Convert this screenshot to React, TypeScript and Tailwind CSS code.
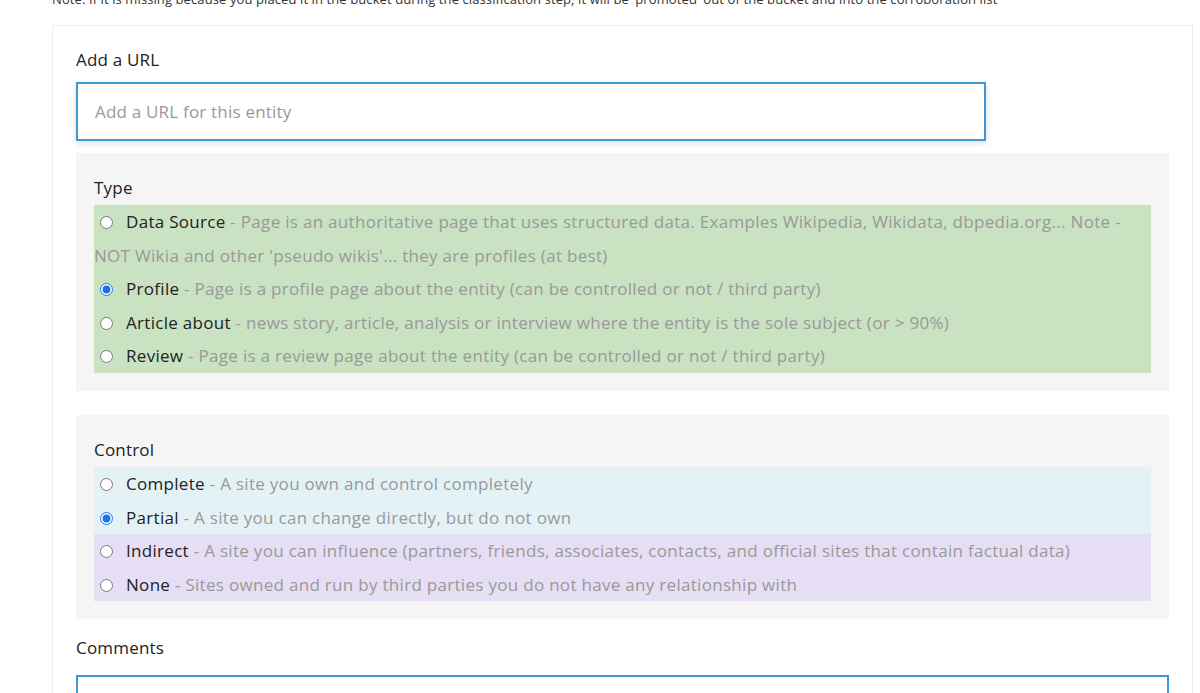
import React, { useState } from 'react';

interface Choice {
  value: string;
  label: string;
  desc: string;
  tint: string;
}

const TYPES: Choice[] = [
  {
    value: 'data',
    label: 'Data Source',
    desc: "Page is an authoritative page that uses structured data. Examples Wikipedia, Wikidata, dbpedia.org... Note - NOT Wikia and other 'pseudo wikis'... they are profiles (at best)",
    tint: 'bg-[#c9e2c1]',
  },
  {
    value: 'profile',
    label: 'Profile',
    desc: 'Page is a profile page about the entity (can be controlled or not / third party)',
    tint: 'bg-[#c9e2c1]',
  },
  {
    value: 'article',
    label: 'Article about',
    desc: 'news story, article, analysis or interview where the entity is the sole subject (or > 90%)',
    tint: 'bg-[#c9e2c1]',
  },
  {
    value: 'review',
    label: 'Review',
    desc: 'Page is a review page about the entity (can be controlled or not / third party)',
    tint: 'bg-[#c9e2c1]',
  },
];

const CONTROLS: Choice[] = [
  { value: 'complete', label: 'Complete', desc: 'A site you own and control completely', tint: 'bg-[#e4f2f6]' },
  { value: 'partial', label: 'Partial', desc: 'A site you can change directly, but do not own', tint: 'bg-[#e4f2f6]' },
  {
    value: 'indirect',
    label: 'Indirect',
    desc: 'A site you can influence (partners, friends, associates, contacts, and official sites that contain factual data)',
    tint: 'bg-[#e6def4]',
  },
  {
    value: 'none',
    label: 'None',
    desc: 'Sites owned and run by third parties you do not have any relationship with',
    tint: 'bg-[#e6def4]',
  },
];

function RadioGroup({
  title,
  name,
  options,
  value,
  onChange,
}: {
  title: string;
  name: string;
  options: Choice[];
  value: string;
  onChange: (v: string) => void;
}) {
  return (
    <div className="bg-[#f5f5f5] px-[18px] pt-[24px] pb-[18px]">
      <div className="text-[17px] leading-[22px] mb-[6px] tracking-[0.2px] text-[#222]">{title}</div>
      <div>
        {options.map((o) => (
          <label
            key={o.value}
            className={`block ${o.tint} text-[17px] leading-[33.6px] tracking-[0.3px] cursor-pointer`}
          >
            <input
              type="radio"
              name={name}
              checked={value === o.value}
              onChange={() => onChange(o.value)}
              className="ml-[6px] mr-[13px] w-[13px] h-[13px] align-[-1px] accent-[#1a73e8]"
            />
            <span className="text-[#222]">{o.label}</span>
            <span className="text-[#999]"> - {o.desc}</span>
          </label>
        ))}
      </div>
    </div>
  );
}

export default function App() {
  const [type, setType] = useState('profile');
  const [control, setControl] = useState('partial');

  return (
    <div className="min-h-[693px] bg-white overflow-hidden font-['Open_Sans',sans-serif]">
      <p className="ml-[52px] mt-[-10px] text-[13px] leading-[18px] tracking-[0.1px] text-[#333]">
        Note: If it is missing because you placed it in the bucket during the classification step, it will be 'promoted' out of the bucket and into the corroboration list
      </p>
      <div className="ml-[52px] mt-[17px] w-[1141px] border border-[#ececec] bg-white px-[23px] pt-[22px] pb-6">
        <div className="text-[17px] leading-[24px] tracking-[0.2px] text-[#222]">Add a URL</div>
        <input
          placeholder="Add a URL for this entity"
          className="mt-[10px] block w-[910px] h-[59px] border-2 border-[#3d9ad6] px-[17px] text-[17px] tracking-[0.2px] text-[#333] placeholder:text-[#999] shadow-[0_2px_6px_rgba(0,0,0,0.15)] outline-none"
        />
        <div className="mt-[12px]">
          <RadioGroup title="Type" name="type" options={TYPES} value={type} onChange={setType} />
        </div>
        <div className="mt-[24px]">
          <RadioGroup title="Control" name="control" options={CONTROLS} value={control} onChange={setControl} />
        </div>
        <div className="mt-[17px] text-[17px] leading-[24px] tracking-[0.2px] text-[#222]">Comments</div>
        <textarea className="mt-[15px] block w-full h-[100px] border-2 border-[#3d9ad6] outline-none" />
      </div>
    </div>
  );
}
